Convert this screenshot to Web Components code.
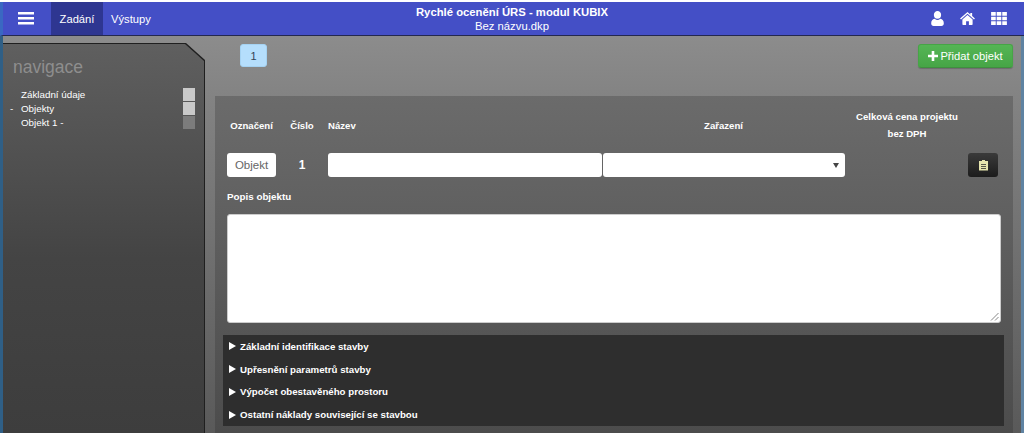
<!DOCTYPE html>
<html lang="cs">
<head>
<meta charset="utf-8">
<title>Rychlé ocenění ÚRS - modul KUBIX</title>
<style>
html, body { margin: 0; height: 100%; overflow: hidden; background: #fff; }
body { font-family: "Liberation Sans", Arial, sans-serif; }
</style>
</head>
<body>
<urs-app>
  <urs-navbar></urs-navbar>
  <urs-sidebar></urs-sidebar>
  <urs-object-panel></urs-object-panel>
</urs-app>

<template id="app-tpl">
<style>
:host { display: flex; flex-direction: column; height: 433px; overflow: hidden; padding-top: 2px; box-sizing: border-box; }
.body { flex: 1; min-height: 0; display: flex; background: linear-gradient(#8c8c8c, #838383 60px, #555 433px); border-left: 3px solid #2f5f86; border-right: 3px solid #5f83a2; }
.main { flex: 1; min-width: 0; padding: 8px 8px 0 10px; display: flex; flex-direction: column; overflow: hidden; }
.top { display: flex; justify-content: space-between; align-items: flex-start; height: 52px; }
.tab { margin-left: 25px; width: 27px; height: 23px; box-sizing: border-box; border: 1px solid #a5d2f2; border-radius: 3px; background: #b5defc; color: #345; font-size: 11px; display: flex; align-items: center; justify-content: center; }
.add { width: 95px; height: 24px; box-sizing: border-box; border: 1px solid #47a447; border-bottom-color: #3f8f3f; border-radius: 3px; background: linear-gradient(#55b555, #46a546); color: #fff; font-size: 11.2px; display: flex; align-items: center; justify-content: center; gap: 2px; box-shadow: 0 1px 1px rgba(0,0,0,.2); }
.add svg { width: 10px; height: 10px; }
</style>
<slot name="nav"></slot>
<div class="body">
  <slot name="side"></slot>
  <div class="main">
    <div class="top">
      <div class="tab">1</div>
      <div class="add"><svg viewBox="0 0 10 10"><path fill="#fff" d="M3.700 0h2.600v3.700H10v2.600H6.300V10H3.700V6.300H0V3.700h3.700z"/></svg>Přidat objekt</div>
    </div>
    <slot name="panel"></slot>
  </div>
</div>
</template>

<template id="navbar-tpl">
<style>
:host { display: flex; align-items: stretch; height: 33px; flex: none; background: #444fc6; border-bottom: 1px solid #23284f; border-left: 3px solid #3a68c2; color: #fff; font-size: 11.2px; position: relative; }
.burger { width: 48px; display: flex; align-items: center; justify-content: center; padding-right: 3px; box-sizing: border-box; }
.burger svg { width: 16px; height: 13px; }
.item { display: flex; align-items: center; padding: 0 8px; }
.item.active { background: #2e3691; width: 52px; box-sizing: border-box; justify-content: center; padding: 0; }
.title { position: absolute; left: -3px; right: 0; top: 3px; text-align: center; line-height: 14px; font-size: 11.3px; }
.title b { display: block; }
.icons { margin-left: auto; display: flex; align-items: center; gap: 16px; padding-right: 17px; z-index: 1; }
</style>
<div class="burger"><svg viewBox="0 0 16 13"><path fill="#fff" d="M0 0h16v2.600H0zM0 5h16v2.600H0zM0 10h16v2.600H0z"/></svg></div>
<div class="item active">Zadání</div>
<div class="item">Výstupy</div>
<div class="title"><b>Rychlé ocenění ÚRS - modul KUBIX</b><span>Bez názvu.dkp</span></div>
<div class="icons">
  <svg width="13" height="15" viewBox="0 0 14 16"><path fill="#fff" d="M7 0a3.900 3.900 0 0 1 3.900 4.200C10.900 6.500 9.600 8.400 7 8.400S3.100 6.500 3.100 4.200A3.900 3.900 0 0 1 7 0zM4 8.200C5 9.100 6 9.500 7 9.500s2-.4 3-1.300c2.400.4 3.800 2 3.800 4.800 0 2-1.100 3-2.600 3H2.800C1.300 16 .2 15 .2 13c0-2.800 1.400-4.400 3.800-4.800z"/></svg>
  <svg width="15" height="13" viewBox="0 0 16 14"><path fill="#fff" d="M8 0l3 2.600V1h2v3.300L16 7l-1 1.100L8 2 1 8.100 0 7zM8 3.200l5.500 4.800v5.200a.8.8 0 0 1-.8.8H9.500v-4h-3v4H3.300a.8.800 0 0 1-.8-.8V8z"/></svg>
  <svg width="16" height="13" viewBox="0 0 17 14"><path fill="#fff" d="M0 0h5v4H0zM6 0h5v4H6zM12 0h5v4h-5zM0 5h5v4H0zM6 5h5v4H6zM12 5h5v4h-5zM0 10h5v4H0zM6 10h5v4H6zM12 10h5v4h-5z"/></svg>
</div>
</template>

<template id="sidebar-tpl">
<style>
:host { display: block; width: 202px; flex: none; margin-top: 7px; padding: 1px 1px 0 0; box-sizing: border-box; background: #1f1f1f; clip-path: polygon(0 0, 183px 0, 202px 17px, 202px 100%, 0 100%); color: #fff; font-size: 9.8px; }
.inner { height: 100%; background: linear-gradient(#5f5f5f, #444 55%, #3d3d3d); clip-path: polygon(0 0, 182px 0, 201px 17px, 201px 100%, 0 100%); overflow: hidden; }
h2 { margin: 13px 0 9px 10px; font-weight: normal; font-size: 17.5px; line-height: 21px; color: #8e8e8e; }
ul { list-style: none; margin: 0; padding: 0; }
li { display: flex; align-items: center; height: 14px; padding-left: 7px; }
.dash { width: 11px; }
.box { margin-left: auto; margin-right: 9px; width: 12px; height: 13px; background: #c9c9c9; }
.box.dim { background: #7c7c7c; }
</style>
<div class="inner">
<h2>navigace</h2>
<ul>
  <li><span class="dash"></span>Základní údaje<span class="box"></span></li>
  <li><span class="dash">-</span>Objekty<span class="box"></span></li>
  <li><span class="dash"></span>Objekt 1 -<span class="box dim"></span></li>
</ul>
</div>
</template>

<template id="panel-tpl">
<style>
:host { display: block; height: 337px; box-sizing: border-box; background: linear-gradient(#6b6b6b, #4c4c4c); padding: 12px 8px 0; color: #fff; font-size: 9.6px; font-weight: bold; }
.row { display: grid; grid-template-columns: 49px 52px 274px 243px 1fr; column-gap: 0; padding-left: 4px; margin-right: 4px; }
.heads { height: 45px; box-sizing: border-box; padding-bottom: 11px; align-items: center; text-align: center; }
.heads .left { text-align: left; }
.price { line-height: 17px; width: 122px; justify-self: start; text-align: center; margin-left: 1px; }
.fields { height: 24px; align-items: stretch; }
.inp { background: #fff; border-radius: 3px; box-sizing: border-box; color: #666; font-weight: normal; }
.code { font-size: 11.5px; display: flex; align-items: center; justify-content: center; }
.num { display: flex; align-items: center; justify-content: center; font-size: 12px; }
.sel { margin-left: 1px; display: flex; align-items: center; justify-content: flex-end; padding-right: 6px; }
.sel i { border: 3px solid transparent; border-top: 5px solid #444; border-bottom: 0; }
.trash-cell { display: flex; justify-content: flex-end; padding-right: 3px; }
.trash { width: 30px; height: 24px; border-radius: 3px; background: linear-gradient(#3a3a3a, #1c1c1c); display: flex; align-items: center; justify-content: center; }
.popis { margin: 14px 0 0 4px; height: 23px; line-height: 12px; font-size: 9.8px; }
.area { margin-left: 4px; margin-right: 4px; height: 109px; background: #fff; border: 1px solid #ccc; border-radius: 3px; box-sizing: border-box; position: relative; }
.grip { position: absolute; right: 1px; bottom: 1px; }
.acc { margin: 12px 1px 0 0; height: 91px; background: #2e2e2e; padding: 0 6px; display: grid; grid-auto-rows: 22.75px; align-items: center; font-size: 9.7px; }
.acc div { display: flex; align-items: center; }
.acc svg { margin-right: 4px; flex: none; }
</style>
<div class="row heads">
  <span>Označení</span><span>Číslo</span><span class="left">Název</span><span>Zařazení</span>
  <span class="price">Celková cena projektu<br>bez DPH</span>
</div>
<div class="row fields">
  <div class="inp code">Objekt</div>
  <div class="num">1</div>
  <div class="inp"></div>
  <div class="inp sel"><i></i></div>
  <div class="trash-cell"><div class="trash"><svg width="9" height="11" viewBox="0 0 9 11"><path fill="#e6e5ae" fill-rule="evenodd" d="M3 0h3v1h3v9.500H0V1h3zM2 4v.8h5V4zM2 6v.8h5V6zM2 8v.8h5V8z"/></svg></div></div>
</div>
<div class="popis">Popis objektu</div>
<div class="area"><svg class="grip" width="9" height="9" viewBox="0 0 9 9"><path stroke="#888" fill="none" d="M1 8.500L8.500 1M5 8.500L8.500 5"/></svg></div>
<div class="acc">
  <div><svg width="7" height="8" viewBox="0 0 7 8"><path fill="#fff" d="M0 0l7 4-7 4z"/></svg>Základní identifikace stavby</div>
  <div><svg width="7" height="8" viewBox="0 0 7 8"><path fill="#fff" d="M0 0l7 4-7 4z"/></svg>Upřesnění parametrů stavby</div>
  <div><svg width="7" height="8" viewBox="0 0 7 8"><path fill="#fff" d="M0 0l7 4-7 4z"/></svg>Výpočet obestavěného prostoru</div>
  <div><svg width="7" height="8" viewBox="0 0 7 8"><path fill="#fff" d="M0 0l7 4-7 4z"/></svg>Ostatní náklady související se stavbou</div>
</div>
</template>

<script>
// each element just stamps its own template into an open shadow root
function define(name, tplId) {
  customElements.define(name, class extends HTMLElement {
    constructor() {
      super();
      this.attachShadow({ mode: 'open' })
        .appendChild(document.getElementById(tplId).content.cloneNode(true));
    }
  });
}

define('urs-app', 'app-tpl');
define('urs-navbar', 'navbar-tpl');
define('urs-sidebar', 'sidebar-tpl');
define('urs-object-panel', 'panel-tpl');

document.querySelector('urs-navbar').slot = 'nav';
document.querySelector('urs-sidebar').slot = 'side';
document.querySelector('urs-object-panel').slot = 'panel';
</script>
</body>
</html>
